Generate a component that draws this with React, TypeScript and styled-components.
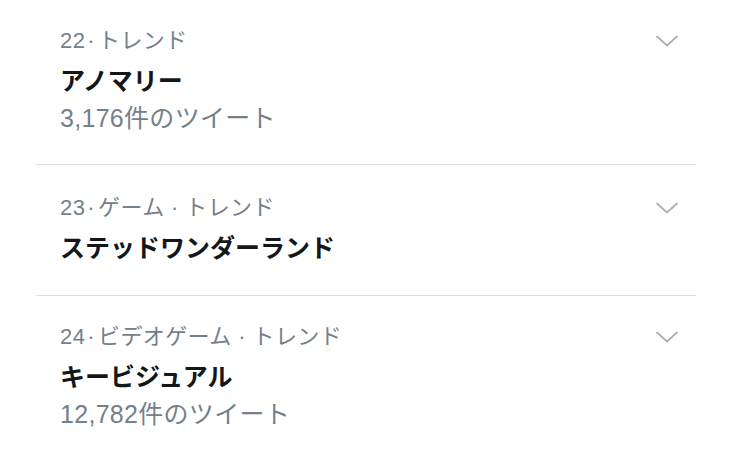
import React from 'react';
import styled, { createGlobalStyle } from 'styled-components';

const GlobalStyle = createGlobalStyle`
  html, body {
    margin: 0;
    padding: 0;
    background: #ffffff;
  }
  body {
    font-family: "Liberation Sans", "Noto Sans CJK JP", sans-serif;
    -webkit-font-smoothing: antialiased;
  }
`;

type Trend = {
  rank: number;
  context: string[];
  name: string;
  tweets?: string;
};

const trends: Trend[] = [
  { rank: 22, context: ['トレンド'], name: 'アノマリー', tweets: '3,176件のツイート' },
  { rank: 23, context: ['ゲーム', 'トレンド'], name: 'ステッドワンダーランド' },
  { rank: 24, context: ['ビデオゲーム', 'トレンド'], name: 'キービジュアル', tweets: '12,782件のツイート' },
];

export default function App() {
  return (
    <Page>
      <GlobalStyle />
      <TrendList>
        {trends.map((t) => (
          <TrendRow key={t.rank} $noCount={!t.tweets}>
            <MetaLine>
              <Meta>
                {t.rank}
                <Dot>·</Dot>
                {t.context.join(' · ')}
              </Meta>
              <Chevron viewBox="0 0 22 12" aria-hidden>
                <path d="M1 1.5 L11 10.5 L21 1.5" />
              </Chevron>
            </MetaLine>
            <TrendName>{t.name}</TrendName>
            {t.tweets && <TweetCount>{t.tweets}</TweetCount>}
          </TrendRow>
        ))}
      </TrendList>
    </Page>
  );
}

const Page = styled.div`
  width: 743px;
  height: 460px;
  overflow: hidden;
  background: #ffffff;
`;

const TrendList = styled.div`
  display: flex;
  flex-direction: column;
  margin-left: 36px;
  width: 660px;
`;

const TrendRow = styled.div<{ $noCount?: boolean }>`
  display: flex;
  flex-direction: column;
  padding: ${(p) => (p.$noCount ? '25px 18px 29px 24px' : '23px 18px 27px 24px')};
  border-bottom: 1px solid #dde0e3;
`;

const MetaLine = styled.div`
  display: flex;
  align-items: center;
  justify-content: space-between;
  height: 36px;
`;

const Meta = styled.span`
  font-size: 22px;
  line-height: 36px;
  letter-spacing: 0.4px;
  color: #75808a;
`;

const Dot = styled.span`
  margin: 0 3px 0 2px;
`;

const Chevron = styled.svg`
  width: 22px;
  height: 12px;
  fill: none;
  stroke: #a9b0b7;
  stroke-width: 1.7;
  stroke-linecap: round;
  stroke-linejoin: round;
`;

const TrendName = styled.div`
  font-family: "Noto Sans CJK JP", sans-serif;
  font-size: 25px;
  line-height: 40px;
  font-weight: 700;
  color: #14171a;
`;

const TweetCount = styled.div`
  font-size: 25px;
  line-height: 38px;
  letter-spacing: 0.3px;
  color: #75808a;
`;
